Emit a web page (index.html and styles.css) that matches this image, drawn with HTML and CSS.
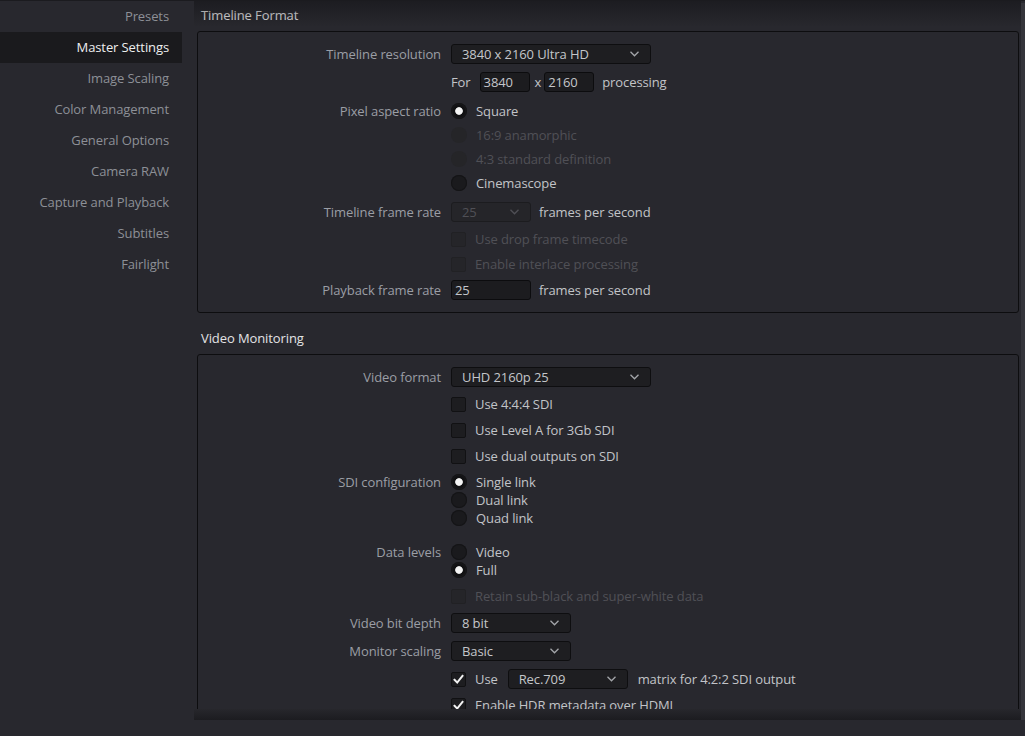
FILE: index.html
```html
<!DOCTYPE html>
<html lang="en">
<head>
<meta charset="utf-8">
<title>Project Settings</title>
<link rel="stylesheet" href="styles.css">
</head>
<body>
<div class="app">
  <nav class="sidebar">
    <div class="nav-item">Presets</div>
    <div class="nav-item active">Master Settings</div>
    <div class="nav-item">Image Scaling</div>
    <div class="nav-item">Color Management</div>
    <div class="nav-item">General Options</div>
    <div class="nav-item">Camera RAW</div>
    <div class="nav-item">Capture and Playback</div>
    <div class="nav-item">Subtitles</div>
    <div class="nav-item">Fairlight</div>
  </nav>
  <div class="main">
    <div class="main-body">
      <div class="scroll">
        <div class="section-title first">Timeline Format</div>
        <div class="panel p1">
          <div class="row h20">
            <div class="label">Timeline resolution</div>
            <div class="ctrl">
              <div class="select w200"><span>3840 x 2160 Ultra HD</span><svg class="chev" width="9" height="6" viewBox="0 0 9 6"><polyline points="0.5,0.8 4.5,4.8 8.5,0.8"/></svg></div>
            </div>
          </div>
          <div class="row h20 mt8">
            <div class="label"></div>
            <div class="ctrl">
              <span class="txt for">For</span>
              <div class="field w50">3840</div>
              <span class="txt times">x</span>
              <div class="field w50">2160</div>
              <span class="txt after">processing</span>
            </div>
          </div>
          <div class="row h24 mt7">
            <div class="label">Pixel aspect ratio</div>
            <div class="ctrl"><span class="radio on"></span><span class="opt">Square</span></div>
          </div>
          <div class="row h24">
            <div class="label"></div>
            <div class="ctrl"><span class="radio dis"></span><span class="opt dim">16:9 anamorphic</span></div>
          </div>
          <div class="row h24">
            <div class="label"></div>
            <div class="ctrl"><span class="radio dis"></span><span class="opt dim">4:3 standard definition</span></div>
          </div>
          <div class="row h24">
            <div class="label"></div>
            <div class="ctrl"><span class="radio"></span><span class="opt">Cinemascope</span></div>
          </div>
          <div class="row h20 mt7">
            <div class="label">Timeline frame rate</div>
            <div class="ctrl">
              <div class="select w80 disabled"><span>25</span><svg class="chev" width="9" height="6" viewBox="0 0 9 6"><polyline points="0.5,0.8 4.5,4.8 8.5,0.8"/></svg></div>
              <span class="txt after">frames per second</span>
            </div>
          </div>
          <div class="row h20 mt7">
            <div class="label"></div>
            <div class="ctrl"><span class="check dis"></span><span class="opt dim">Use drop frame timecode</span></div>
          </div>
          <div class="row h20 mt5">
            <div class="label"></div>
            <div class="ctrl"><span class="check dis"></span><span class="opt dim">Enable interlace processing</span></div>
          </div>
          <div class="row h20 mt6">
            <div class="label">Playback frame rate</div>
            <div class="ctrl">
              <div class="field w80">25</div>
              <span class="txt after">frames per second</span>
            </div>
          </div>
        </div>

        <div class="section-title">Video Monitoring</div>
        <div class="panel p2">
          <div class="row h20">
            <div class="label">Video format</div>
            <div class="ctrl">
              <div class="select w200"><span>UHD 2160p 25</span><svg class="chev" width="9" height="6" viewBox="0 0 9 6"><polyline points="0.5,0.8 4.5,4.8 8.5,0.8"/></svg></div>
            </div>
          </div>
          <div class="row h20 mt7">
            <div class="label"></div>
            <div class="ctrl"><span class="check"></span><span class="opt">Use 4:4:4 SDI</span></div>
          </div>
          <div class="row h20 mt6">
            <div class="label"></div>
            <div class="ctrl"><span class="check"></span><span class="opt">Use Level A for 3Gb SDI</span></div>
          </div>
          <div class="row h20 mt6">
            <div class="label"></div>
            <div class="ctrl"><span class="check"></span><span class="opt">Use dual outputs on SDI</span></div>
          </div>
          <div class="row h18 mt7">
            <div class="label">SDI configuration</div>
            <div class="ctrl"><span class="radio on"></span><span class="opt">Single link</span></div>
          </div>
          <div class="row h18">
            <div class="label"></div>
            <div class="ctrl"><span class="radio"></span><span class="opt">Dual link</span></div>
          </div>
          <div class="row h18">
            <div class="label"></div>
            <div class="ctrl"><span class="radio"></span><span class="opt">Quad link</span></div>
          </div>
          <div class="row h18 mt16">
            <div class="label">Data levels</div>
            <div class="ctrl"><span class="radio"></span><span class="opt">Video</span></div>
          </div>
          <div class="row h18">
            <div class="label"></div>
            <div class="ctrl"><span class="radio on"></span><span class="opt">Full</span></div>
          </div>
          <div class="row h20 mt7">
            <div class="label"></div>
            <div class="ctrl"><span class="check dis"></span><span class="opt dim">Retain sub-black and super-white data</span></div>
          </div>
          <div class="row h20 mt7">
            <div class="label">Video bit depth</div>
            <div class="ctrl">
              <div class="select w120"><span>8 bit</span><svg class="chev" width="9" height="6" viewBox="0 0 9 6"><polyline points="0.5,0.8 4.5,4.8 8.5,0.8"/></svg></div>
            </div>
          </div>
          <div class="row h20 mt8">
            <div class="label">Monitor scaling</div>
            <div class="ctrl">
              <div class="select w120"><span>Basic</span><svg class="chev" width="9" height="6" viewBox="0 0 9 6"><polyline points="0.5,0.8 4.5,4.8 8.5,0.8"/></svg></div>
            </div>
          </div>
          <div class="row h20 mt8">
            <div class="label"></div>
            <div class="ctrl">
              <span class="check on"><svg width="13" height="13" viewBox="0 0 13 13"><polyline points="2.5,6.8 5.2,9.6 10.5,2.8"/></svg></span>
              <span class="opt">Use</span>
              <div class="select w120 inline"><span>Rec.709</span><svg class="chev" width="9" height="6" viewBox="0 0 9 6"><polyline points="0.5,0.8 4.5,4.8 8.5,0.8"/></svg></div>
              <span class="txt after2">matrix for 4:2:2 SDI output</span>
            </div>
          </div>
          <div class="row h20 mt6">
            <div class="label"></div>
            <div class="ctrl">
              <span class="check on"><svg width="13" height="13" viewBox="0 0 13 13"><polyline points="2.5,6.8 5.2,9.6 10.5,2.8"/></svg></span>
              <span class="opt">Enable HDR metadata over HDMI</span>
            </div>
          </div>
        </div>
      </div>
      <div class="scrollbar"></div>
    </div>
  </div>
</div>
</body>
</html>
```

FILE: styles.css
```css
* { box-sizing: border-box; margin: 0; padding: 0; }

html, body { height: 100%; }

body {
  margin: 0;
  background: #28282e;
  font-family: "Open Sans", "Noto Sans", sans-serif;
  font-size: 13px;
  letter-spacing: -0.1px;
  color: #c4c6ca;
  overflow: hidden;
}

.app {
  display: flex;
  height: 736px;
  border-top: 1px solid #1b1b1f;
}

/* Sidebar */
.sidebar {
  width: 194px;
  flex: none;
  padding-right: 12px;
}

.nav-item {
  height: 31px;
  line-height: 30px;
  text-align: right;
  padding-right: 13px;
  color: #8d9097;
  white-space: nowrap;
}

.nav-item.active {
  background: #1a1a1d;
  color: #eeeeef;
}

/* Main */
.main {
  flex: 1;
  min-width: 0;
  display: flex;
  flex-direction: column;
}

.main-body {
  display: flex;
  height: 719px;
}

.scroll {
  flex: 1;
  min-width: 0;
  overflow: hidden;
  position: relative;
}

.scroll::before,
.scroll::after {
  content: "";
  position: absolute;
  left: 0;
  right: 0;
  pointer-events: none;
  z-index: 2;
}

.scroll::before {
  top: 0;
  height: 26px;
  background: linear-gradient(to bottom, rgba(14, 14, 17, 0.45), rgba(14, 14, 17, 0));
}

/* bottom edge of the scrolled view: an opaque fading strip that hides the content below */
.scroll::after {
  bottom: 0;
  height: 11px;
  background: linear-gradient(to bottom, #27272c, #1c1c20);
}

.scrollbar {
  width: 4px;
  flex: none;
  margin-top: 2px;
  background: #35353b;
}

.section-title {
  height: 31px;
  line-height: 30px;
  padding-left: 7px;
  color: #e3e3e5;
  margin-top: 10px;
  white-space: nowrap;
}

.section-title.first {
  height: 30px;
  line-height: 28px;
  margin-top: 0;
}

.panel {
  margin: 0 2px 0 3px;
  border: 1px solid #0d0d0f;
  border-radius: 3px;
  padding-top: 12px;
}

.p1 { padding-bottom: 12px; }
.p2 { padding-bottom: 20px; }

/* Form rows */
.row {
  display: flex;
  align-items: center;
  line-height: 18px;
  white-space: nowrap;
}

.h18 { height: 18px; }
.h20 { height: 20px; }
.h24 { height: 24px; }

.mt5 { margin-top: 5px; }
.mt6 { margin-top: 6px; }
.mt7 { margin-top: 7px; }
.mt8 { margin-top: 8px; }
.mt16 { margin-top: 16px; }

.label {
  width: 243px;
  flex: none;
  text-align: right;
  color: #9b9ea5;
}

.ctrl {
  margin-left: 10px;
  display: flex;
  align-items: center;
  height: 100%;
}

.txt { color: #c2c4c8; }
.for { margin-right: 9px; }
.times { margin: 0 3px 0 5px; }
.after { margin-left: 8px; }
.after2 { margin-left: 10px; }

.opt {
  margin-left: 9px;
  color: #c2c4c8;
}

.opt.dim { color: #505056; }

/* Dropdown */
.select {
  height: 20px;
  border: 1px solid #0e0e10;
  border-radius: 3px;
  background: #1e1e21;
  display: flex;
  align-items: center;
  justify-content: space-between;
  padding: 0 11px 0 10px;
  color: #c4c6ca;
}

.select.inline { margin-left: 10px; }

.select .chev {
  fill: none;
  stroke: #a4a6aa;
  stroke-width: 1.3;
}

.select.disabled {
  background: #252529;
  border-color: #1c1c1f;
  color: #505056;
}

.select.disabled .chev { stroke: #505056; }

.w50 { width: 50px; }
.w80 { width: 80px; }
.w120 { width: 120px; }
.w200 { width: 200px; }

/* Text field */
.field {
  height: 20px;
  border: 1px solid #0c0c0e;
  border-radius: 3px;
  background: #1c1c1f;
  padding-left: 3px;
  line-height: 18px;
  color: #c4c6ca;
}

/* Radio */
.radio {
  width: 16px;
  height: 16px;
  flex: none;
  border-radius: 50%;
  background: #1a1a1d;
  box-shadow: inset 0 0 0 1px #141416;
}

.radio.on {
  background: radial-gradient(circle, #f4f4f4 0, #f4f4f4 3.4px, #111113 4.2px, #111113 6px, #1a1a1d 7px);
}

.radio.dis {
  background: #252528;
  box-shadow: none;
}

/* Checkbox */
.check {
  width: 15px;
  height: 15px;
  flex: none;
  border: 1px solid #111113;
  border-radius: 2px;
  background: #1d1d20;
  display: flex;
  align-items: center;
  justify-content: center;
}

.check.dis {
  background: #252529;
  border-color: #212124;
}

.check.on svg {
  fill: none;
  stroke: #f2f2f2;
  stroke-width: 2;
  stroke-linecap: square;
}
```
